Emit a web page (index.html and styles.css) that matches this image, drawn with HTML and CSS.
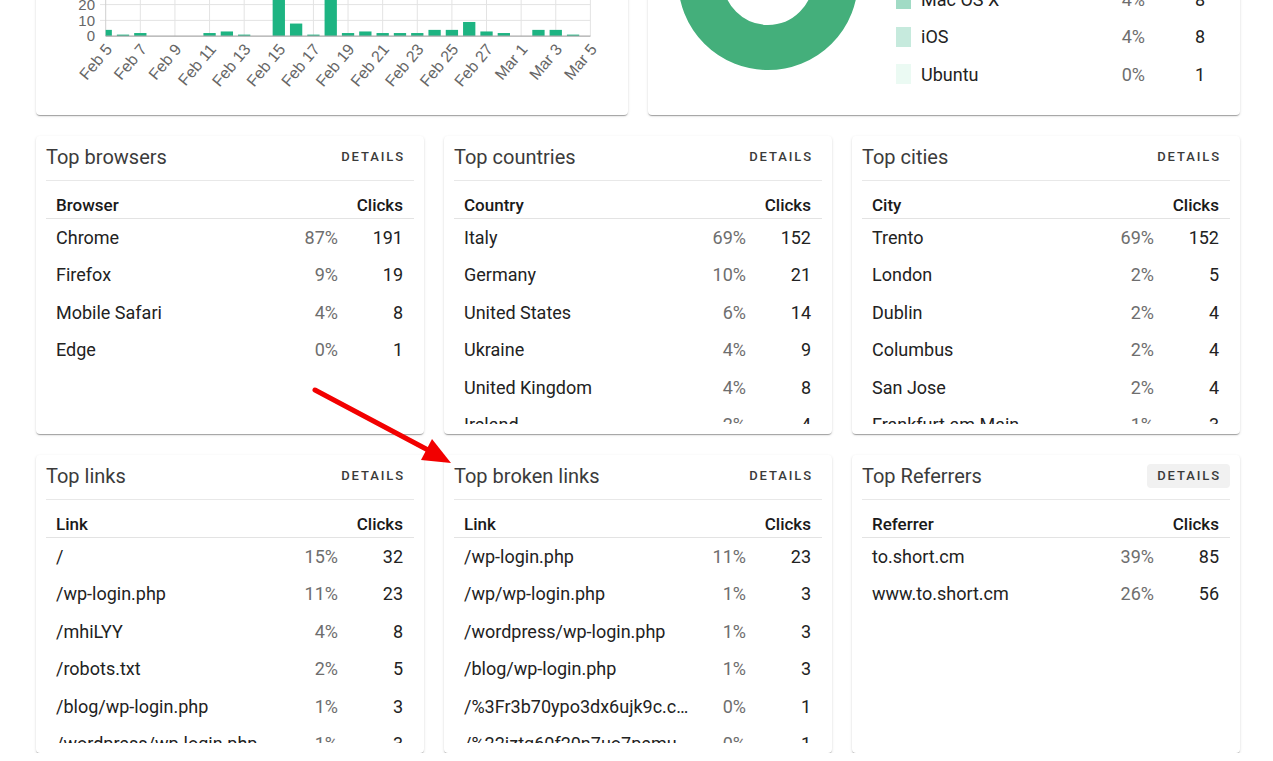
FILE: index.html
```html
<!DOCTYPE html>
<html lang="en">
  <head>
    <meta charset="UTF-8" />
    <title>Link statistics</title>
    <link rel="stylesheet" href="styles.css">
  </head>
  <body>
    <div class="page">
      <!-- Charts row -->
      <div class="row row-two">
        <section class="card card-top">
          <svg class="chart" width="592" height="300" viewBox="0 0 592 300">
            <defs>
              <clipPath id="plot">
                <rect x="105.7" y="-100" width="484.7" height="136.2" />
              </clipPath>
            </defs>
            <g transform="translate(-36,185)">
              <g class="grid">
                <line x1="100" y1="20.4" x2="590.4" y2="20.4" />
                <line x1="100" y1="4.6" x2="590.4" y2="4.6" />
                <line x1="100" y1="-11.2" x2="590.4" y2="-11.2" />
                <line x1="100" y1="-27" x2="590.4" y2="-27" />
                <line x1="100" y1="-42.8" x2="590.4" y2="-42.8" />
                <line x1="100" y1="-58.6" x2="590.4" y2="-58.6" />
                <line x1="100" y1="-74.4" x2="590.4" y2="-74.4" />
                <line x1="100" y1="-90.2" x2="590.4" y2="-90.2" />
                <line x1="140.32" y1="-90.2" x2="140.32" y2="36.2" />
                <line x1="174.94" y1="-90.2" x2="174.94" y2="36.2" />
                <line x1="209.56" y1="-90.2" x2="209.56" y2="36.2" />
                <line x1="244.18" y1="-90.2" x2="244.18" y2="36.2" />
                <line x1="278.8" y1="-90.2" x2="278.8" y2="36.2" />
                <line x1="313.42" y1="-90.2" x2="313.42" y2="36.2" />
                <line x1="348.04" y1="-90.2" x2="348.04" y2="36.2" />
                <line x1="382.66" y1="-90.2" x2="382.66" y2="36.2" />
                <line x1="417.28" y1="-90.2" x2="417.28" y2="36.2" />
                <line x1="451.9" y1="-90.2" x2="451.9" y2="36.2" />
                <line x1="486.52" y1="-90.2" x2="486.52" y2="36.2" />
                <line x1="521.14" y1="-90.2" x2="521.14" y2="36.2" />
                <line x1="555.76" y1="-90.2" x2="555.76" y2="36.2" />
                <line x1="590.38" y1="-90.2" x2="590.38" y2="36.2" />
              </g>
              <line class="axis-y" x1="105.7" y1="-90.2" x2="105.7" y2="36.2" />

              <g class="bars" clip-path="url(#plot)">
                <rect x="99.55" y="29.88" width="12.3" height="6.32" />
                <rect x="116.86" y="34.62" width="12.3" height="1.58" />
                <rect x="134.17" y="33.04" width="12.3" height="3.16" />
                <rect x="203.41" y="33.04" width="12.3" height="3.16" />
                <rect x="220.72" y="31.46" width="12.3" height="4.74" />
                <rect x="238.03" y="34.62" width="12.3" height="1.58" />
                <rect x="272.65" y="-87.04" width="12.3" height="123.24" />
                <rect x="289.96" y="23.56" width="12.3" height="12.64" />
                <rect x="307.27" y="34.62" width="12.3" height="1.58" />
                <rect x="324.58" y="-85.46" width="12.3" height="121.66" />
                <rect x="341.89" y="33.04" width="12.3" height="3.16" />
                <rect x="359.2" y="31.46" width="12.3" height="4.74" />
                <rect x="376.51" y="33.04" width="12.3" height="3.16" />
                <rect x="393.82" y="33.04" width="12.3" height="3.16" />
                <rect x="411.13" y="33.04" width="12.3" height="3.16" />
                <rect x="428.44" y="29.88" width="12.3" height="6.32" />
                <rect x="445.75" y="29.88" width="12.3" height="6.32" />
                <rect x="463.06" y="21.98" width="12.3" height="14.22" />
                <rect x="480.37" y="31.46" width="12.3" height="4.74" />
                <rect x="497.68" y="33.04" width="12.3" height="3.16" />
                <rect x="532.3" y="29.88" width="12.3" height="6.32" />
                <rect x="549.61" y="29.88" width="12.3" height="6.32" />
                <rect x="566.92" y="34.62" width="12.3" height="1.58" />
              </g>
              <line class="axis-x" x1="105.7" y1="36.2" x2="590.4" y2="36.2" />

              <g class="y-labels">
                <text x="95" y="36.2" dy="0.35em">0</text>
                <text x="95" y="20.4" dy="0.35em">10</text>
                <text x="95" y="4.6" dy="0.35em">20</text>
                <text x="95" y="-11.2" dy="0.35em">30</text>
                <text x="95" y="-27" dy="0.35em">40</text>
                <text x="95" y="-42.8" dy="0.35em">50</text>
                <text x="95" y="-58.6" dy="0.35em">60</text>
                <text x="95" y="-74.4" dy="0.35em">70</text>
                <text x="95" y="-90.2" dy="0.35em">80</text>
              </g>
              <g class="x-labels">
                <text transform="translate(108.7,46) rotate(-50)" dy="0.35em">Feb 5</text>
                <text transform="translate(143.32,46) rotate(-50)" dy="0.35em">Feb 7</text>
                <text transform="translate(177.94,46) rotate(-50)" dy="0.35em">Feb 9</text>
                <text transform="translate(212.56,46) rotate(-50)" dy="0.35em">Feb 11</text>
                <text transform="translate(247.18,46) rotate(-50)" dy="0.35em">Feb 13</text>
                <text transform="translate(281.8,46) rotate(-50)" dy="0.35em">Feb 15</text>
                <text transform="translate(316.42,46) rotate(-50)" dy="0.35em">Feb 17</text>
                <text transform="translate(351.04,46) rotate(-50)" dy="0.35em">Feb 19</text>
                <text transform="translate(385.66,46) rotate(-50)" dy="0.35em">Feb 21</text>
                <text transform="translate(420.28,46) rotate(-50)" dy="0.35em">Feb 23</text>
                <text transform="translate(454.9,46) rotate(-50)" dy="0.35em">Feb 25</text>
                <text transform="translate(489.52,46) rotate(-50)" dy="0.35em">Feb 27</text>
                <text transform="translate(524.14,46) rotate(-50)" dy="0.35em">Mar 1</text>
                <text transform="translate(558.76,46) rotate(-50)" dy="0.35em">Mar 3</text>
                <text transform="translate(593.38,46) rotate(-50)" dy="0.35em">Mar 5</text>
              </g>
            </g>
          </svg>
        </section>

        <section class="card card-top card-donut">
          <svg class="donut" width="240" height="300" viewBox="0 0 240 300">
            <circle cx="120" cy="165" r="67.5" fill="none" stroke="#44af7b" stroke-width="45" />
          </svg>
          <div class="legend">
            <div class="legend-row">
              <span class="swatch swatch-1"></span>
              <span class="legend-name">Windows</span>
              <span class="pct">70%</span>
              <span class="num">153</span>
            </div>
            <div class="legend-row">
              <span class="swatch swatch-2"></span>
              <span class="legend-name">Android</span>
              <span class="pct">13%</span>
              <span class="num">29</span>
            </div>
            <div class="legend-row">
              <span class="swatch swatch-3"></span>
              <span class="legend-name">Linux</span>
              <span class="pct">9%</span>
              <span class="num">20</span>
            </div>
            <div class="legend-row">
              <span class="swatch swatch-4"></span>
              <span class="legend-name">Mac OS X</span>
              <span class="pct">4%</span>
              <span class="num">8</span>
            </div>
            <div class="legend-row">
              <span class="swatch swatch-5"></span>
              <span class="legend-name">iOS</span>
              <span class="pct">4%</span>
              <span class="num">8</span>
            </div>
            <div class="legend-row">
              <span class="swatch swatch-6"></span>
              <span class="legend-name">Ubuntu</span>
              <span class="pct">0%</span>
              <span class="num">1</span>
            </div>
          </div>
        </section>
      </div>

      <!-- Audience row -->
      <div class="row row-three">
        <section class="card card-table">
          <div class="card-head">
            <h2 class="card-title">Top browsers</h2>
            <button class="btn">Details</button>
          </div>
          <div class="table-wrap">
            <table>
              <colgroup><col /><col class="col-pct" /><col class="col-num" /></colgroup>
              <thead><tr><th>Browser</th><th></th><th class="num">Clicks</th></tr></thead>
              <tbody>
                <tr><td>Chrome</td><td class="pct">87%</td><td class="num">191</td></tr>
                <tr><td>Firefox</td><td class="pct">9%</td><td class="num">19</td></tr>
                <tr><td>Mobile Safari</td><td class="pct">4%</td><td class="num">8</td></tr>
                <tr><td>Edge</td><td class="pct">0%</td><td class="num">1</td></tr>
              </tbody>
            </table>
          </div>
        </section>

        <section class="card card-table">
          <div class="card-head">
            <h2 class="card-title">Top countries</h2>
            <button class="btn">Details</button>
          </div>
          <div class="table-wrap">
            <table>
              <colgroup><col /><col class="col-pct" /><col class="col-num" /></colgroup>
              <thead><tr><th>Country</th><th></th><th class="num">Clicks</th></tr></thead>
              <tbody>
                <tr><td>Italy</td><td class="pct">69%</td><td class="num">152</td></tr>
                <tr><td>Germany</td><td class="pct">10%</td><td class="num">21</td></tr>
                <tr><td>United States</td><td class="pct">6%</td><td class="num">14</td></tr>
                <tr><td>Ukraine</td><td class="pct">4%</td><td class="num">9</td></tr>
                <tr><td>United Kingdom</td><td class="pct">4%</td><td class="num">8</td></tr>
                <tr><td>Ireland</td><td class="pct">2%</td><td class="num">4</td></tr>
                <tr><td>France</td><td class="pct">1%</td><td class="num">3</td></tr>
              </tbody>
            </table>
          </div>
        </section>

        <section class="card card-table">
          <div class="card-head">
            <h2 class="card-title">Top cities</h2>
            <button class="btn">Details</button>
          </div>
          <div class="table-wrap">
            <table>
              <colgroup><col /><col class="col-pct" /><col class="col-num" /></colgroup>
              <thead><tr><th>City</th><th></th><th class="num">Clicks</th></tr></thead>
              <tbody>
                <tr><td>Trento</td><td class="pct">69%</td><td class="num">152</td></tr>
                <tr><td>London</td><td class="pct">2%</td><td class="num">5</td></tr>
                <tr><td>Dublin</td><td class="pct">2%</td><td class="num">4</td></tr>
                <tr><td>Columbus</td><td class="pct">2%</td><td class="num">4</td></tr>
                <tr><td>San Jose</td><td class="pct">2%</td><td class="num">4</td></tr>
                <tr><td>Frankfurt am Main</td><td class="pct">1%</td><td class="num">3</td></tr>
                <tr><td>Berlin</td><td class="pct">1%</td><td class="num">2</td></tr>
              </tbody>
            </table>
          </div>
        </section>
      </div>

      <!-- Links row -->
      <div class="row row-three">
        <section class="card card-table">
          <div class="card-head">
            <h2 class="card-title">Top links</h2>
            <button class="btn">Details</button>
          </div>
          <div class="table-wrap">
            <table>
              <colgroup><col /><col class="col-pct" /><col class="col-num" /></colgroup>
              <thead><tr><th>Link</th><th></th><th class="num">Clicks</th></tr></thead>
              <tbody>
                <tr><td>/</td><td class="pct">15%</td><td class="num">32</td></tr>
                <tr><td>/wp-login.php</td><td class="pct">11%</td><td class="num">23</td></tr>
                <tr><td>/mhiLYY</td><td class="pct">4%</td><td class="num">8</td></tr>
                <tr><td>/robots.txt</td><td class="pct">2%</td><td class="num">5</td></tr>
                <tr><td>/blog/wp-login.php</td><td class="pct">1%</td><td class="num">3</td></tr>
                <tr><td>/wordpress/wp-login.php</td><td class="pct">1%</td><td class="num">3</td></tr>
              </tbody>
            </table>
          </div>
        </section>

        <section class="card card-table">
          <div class="card-head">
            <h2 class="card-title">Top broken links</h2>
            <button class="btn">Details</button>
          </div>
          <div class="table-wrap">
            <table>
              <colgroup><col /><col class="col-pct" /><col class="col-num" /></colgroup>
              <thead><tr><th>Link</th><th></th><th class="num">Clicks</th></tr></thead>
              <tbody>
                <tr><td>/wp-login.php</td><td class="pct">11%</td><td class="num">23</td></tr>
                <tr><td>/wp/wp-login.php</td><td class="pct">1%</td><td class="num">3</td></tr>
                <tr><td>/wordpress/wp-login.php</td><td class="pct">1%</td><td class="num">3</td></tr>
                <tr><td>/blog/wp-login.php</td><td class="pct">1%</td><td class="num">3</td></tr>
                <tr><td>/%3Fr3b70ypo3dx6ujk9c.com/wp-login.php</td><td class="pct">0%</td><td class="num">1</td></tr>
                <tr><td>/%22iztg60f20n7uo7pemu.com/</td><td class="pct">0%</td><td class="num">1</td></tr>
              </tbody>
            </table>
          </div>
        </section>

        <section class="card card-table">
          <div class="card-head">
            <h2 class="card-title">Top Referrers</h2>
            <button class="btn btn-hover">Details</button>
          </div>
          <div class="table-wrap">
            <table>
              <colgroup><col /><col class="col-pct" /><col class="col-num" /></colgroup>
              <thead><tr><th>Referrer</th><th></th><th class="num">Clicks</th></tr></thead>
              <tbody>
                <tr><td>to.short.cm</td><td class="pct">39%</td><td class="num">85</td></tr>
                <tr><td>www.to.short.cm</td><td class="pct">26%</td><td class="num">56</td></tr>
              </tbody>
            </table>
          </div>
        </section>
      </div>
    </div>

    <!-- Annotation arrow -->
    <svg class="annotation" width="1273" height="761" viewBox="0 0 1273 761">
      <line x1="315" y1="390" x2="428" y2="450" stroke="#f20000" stroke-width="5" stroke-linecap="round" />
      <polygon points="451,463 421,460 432,439" fill="#f20000" />
    </svg>
  </body>
</html>
```

FILE: styles.css
```css
/* General */
html,
body {
  margin: 0;
  overflow: hidden;
  background: #fff;
}

body {
  font-family: Roboto, "Noto Sans", sans-serif;
  color: #222;
}

.page {
  width: 1204px;
  margin: -185px 0 0 36px;
  display: flex;
  flex-direction: column;
  gap: 21px;
}

.row {
  display: grid;
  gap: 20px;
}

.row-two {
  grid-template-columns: 1fr 1fr;
}

.row-three {
  grid-template-columns: repeat(3, 1fr);
}

.card {
  background: #fff;
  border-radius: 4px;
  box-shadow: 0 2px 1px -1px rgba(0, 0, 0, 0.2),
    0 1px 1px 0 rgba(0, 0, 0, 0.14), 0 1px 3px 0 rgba(0, 0, 0, 0.12);
}

/* Charts */
.card-top {
  height: 300px;
  overflow: hidden;
}

.chart {
  display: block;
}

.chart .grid line {
  stroke: #e3e3e3;
  stroke-width: 1;
}

.chart .axis-y {
  stroke: #cfcfcf;
  stroke-width: 1;
}

.chart .axis-x {
  stroke: #a9a9a9;
  stroke-width: 1.2;
}

.chart .bars rect {
  fill: #1db482;
}

.chart text {
  font-family: "Liberation Sans", Arial, sans-serif;
  font-size: 15px;
  fill: #666;
  text-anchor: end;
}

.chart .x-labels text {
  font-size: 16px;
}

.card-donut {
  display: flex;
  align-items: flex-end;
}

.donut {
  display: block;
  flex: none;
}

.legend {
  flex: 1;
  margin: 0 35px 0 8px;
  padding-bottom: 22px;
}

.legend-row {
  display: grid;
  grid-template-columns: 15px 1fr 60px 60px;
  align-items: center;
  height: 37.5px;
  font-size: 18px;
}

.swatch {
  width: 15px;
  height: 20px;
}

.swatch-1 { background: #44af7b; }
.swatch-2 { background: #5fbf90; }
.swatch-3 { background: #80ceab; }
.swatch-4 { background: #a1dbc5; }
.swatch-5 { background: #c6eadd; }
.swatch-6 { background: #ebfaf3; }

.legend-name {
  padding-left: 10px;
}

.legend .pct {
  text-align: right;
  color: #6e6e6e;
}

.legend .num {
  text-align: right;
}

/* Table cards */
.card-table {
  height: 298px;
  padding: 0 10px 10px;
  box-sizing: border-box;
  display: flex;
  flex-direction: column;
}

.card-head {
  display: flex;
  justify-content: space-between;
  align-items: center;
  padding: 9px 0 11px;
  border-bottom: 1px solid #e8e8e8;
}

.card-title {
  margin: 0;
  font-size: 20px;
  font-weight: 400;
  line-height: 24px;
  color: #3b3b3b;
}

.btn {
  height: 24px;
  padding: 0 9px 0 10px;
  border: none;
  border-radius: 4px;
  background: none;
  font-family: Roboto, sans-serif;
  font-size: 13px;
  font-weight: 500;
  letter-spacing: 1.9px;
  line-height: 24px;
  text-transform: uppercase;
  color: #3a3a3a;
  cursor: pointer;
}

.btn-hover {
  background: #f1f1f1;
}

.table-wrap {
  flex: 1;
  overflow: hidden;
}

table {
  width: 100%;
  border-collapse: collapse;
  table-layout: fixed;
  font-size: 18px;
}

.col-pct {
  width: 56px;
}

.col-num {
  width: 66px;
}

th {
  padding: 12px 10px 1px;
  font-size: 17px;
  font-weight: 500;
  line-height: 24px;
  text-align: left;
  color: #1a1a1a;
  border-bottom: 1px solid #e3e3e3;
}

td {
  height: 37.5px;
  padding: 0 4px 0 10px;
  line-height: 24px;
  white-space: nowrap;
  overflow: hidden;
  text-overflow: ellipsis;
  color: #222;
}

td.pct {
  padding: 0 10px 0 0;
  text-align: right;
  color: #6e6e6e;
}

td.num,
th.num {
  padding-left: 0;
  padding-right: 11px;
  text-align: right;
}

/* Annotation */
.annotation {
  position: fixed;
  top: 0;
  left: 0;
  pointer-events: none;
}
```
